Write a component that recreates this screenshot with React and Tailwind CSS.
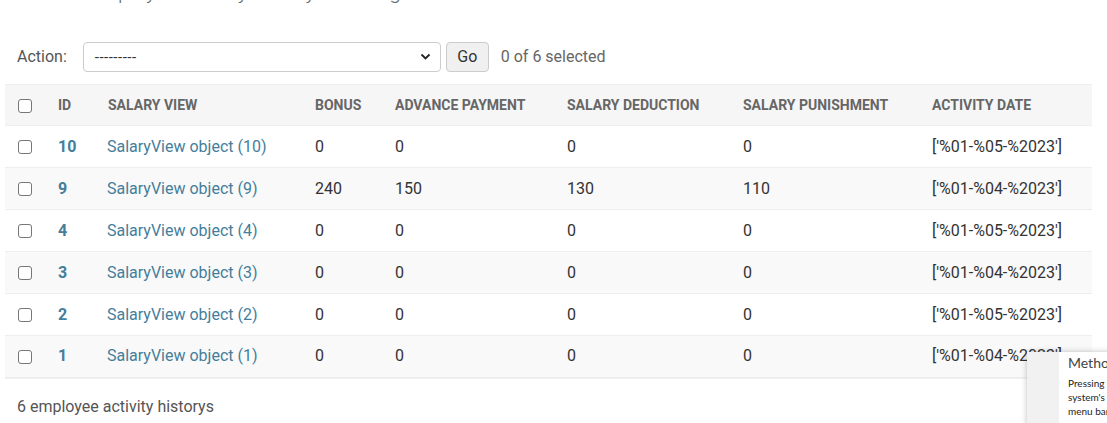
import React from "react";

const rows = [
  { id: 10, b: 0, a: 0, d: 0, p: 0, date: "['%01-%05-%2023']" },
  { id: 9, b: 240, a: 150, d: 130, p: 110, date: "['%01-%04-%2023']" },
  { id: 4, b: 0, a: 0, d: 0, p: 0, date: "['%01-%05-%2023']" },
  { id: 3, b: 0, a: 0, d: 0, p: 0, date: "['%01-%04-%2023']" },
  { id: 2, b: 0, a: 0, d: 0, p: 0, date: "['%01-%05-%2023']" },
  { id: 1, b: 0, a: 0, d: 0, p: 0, date: "['%01-%04-%2023']" },
];

function Box() {
  return <span className="inline-block w-[14px] h-[14px] rounded-[3px] border border-[#767676] bg-white align-middle" />;
}

export default function App() {
  return (
    <div className="relative w-[1107px] h-[423px] overflow-hidden bg-white text-[#333]" style={{ fontFamily: "Roboto, 'Liberation Sans', sans-serif" }}>
      <h1 className="mt-[-20px] ml-[27px] text-[21px] leading-[24px] font-light text-[#666] whitespace-nowrap">Select employee activity history to change</h1>

      <div className="mt-[38px] ml-[17px] flex items-center h-[30px] text-[16px]">
        <span className="text-[#555]">Action:</span>
        <div className="ml-[16px] w-[358px] h-[30px] border border-[#ccc] rounded-[4px] flex items-center justify-between pl-[11px] pr-[9px]">
          <span className="text-[15px] text-[#333] tracking-[0.5px]">---------</span>
          <svg width="11" height="8" viewBox="0 0 11 8"><path d="M1.5 1.5 L5.5 5.5 L9.5 1.5" fill="none" stroke="#222" strokeWidth="1.8" /></svg>
        </div>
        <button className="ml-[5px] w-[43px] h-[30px] border border-[#ccc] rounded-[4px] bg-[#f0f0f0] text-[16px] text-[#333]">Go</button>
        <span className="ml-[12px] text-[#666]">0 of 6 selected</span>
      </div>

      <table className="mt-[12px] ml-[5px] w-[1087px] border-collapse text-[16px]" style={{ tableLayout: "fixed" }}>
        <colgroup>
          <col className="w-[45px]" />
          <col className="w-[50px]" />
          <col className="w-[207px]" />
          <col className="w-[80px]" />
          <col className="w-[172px]" />
          <col className="w-[176px]" />
          <col className="w-[189px]" />
          <col className="w-[168px]" />
        </colgroup>
        <thead>
          <tr className="h-[41px] bg-[#f6f6f6] border-t border-b border-[#eee]">
            <th className="pl-[13px] text-left"><Box /></th>
            {["ID", "SALARY VIEW", "BONUS", "ADVANCE PAYMENT", "SALARY DEDUCTION", "SALARY PUNISHMENT", "ACTIVITY DATE"].map((h) => (
              <th key={h} className="pl-[8px] text-left text-[14px] font-bold text-[#666] whitespace-nowrap">{h}</th>
            ))}
          </tr>
        </thead>
        <tbody>
          {rows.map((r, i) => (
            <tr key={r.id} className={`h-[42px] border-b border-[#eee] ${i % 2 ? "bg-[#f9f9f9]" : "bg-white"} ${i === rows.length - 1 ? "border-b-2" : ""}`}>
              <td className="pl-[13px]"><Box /></td>
              <td className="pl-[8px] font-bold text-[#447e9b]">{r.id}</td>
              <td className="pl-[7px] text-[#447e9b] whitespace-nowrap">SalaryView object ({r.id})</td>
              <td className="pl-[8px]">{r.b}</td>
              <td className="pl-[8px]">{r.a}</td>
              <td className="pl-[8px]">{r.d}</td>
              <td className="pl-[8px]">{r.p}</td>
              <td className="pl-[8px] whitespace-nowrap">{r.date}</td>
            </tr>
          ))}
        </tbody>
      </table>

      <div className="mt-[16px] ml-[17px] text-[16px] text-[#555]">6 employee activity historys</div>

      <div className="absolute left-[1027px] top-[352px] w-[320px] h-[120px] bg-white flex shadow-[0_0_6px_rgba(0,0,0,0.25)]" style={{ fontFamily: "Lato, 'Open Sans', sans-serif" }}>
        <div className="w-[32px] bg-[#f1f1f1]" />
        <div className="pl-[9px] pt-[1px]">
          <div className="text-[14px] leading-[20px] text-[#444]">Method of opening</div>
          <div className="mt-[3px] text-[10px] leading-[14px] text-[#222]">
            <div>Pressing the key</div>
            <div>system's keyboard</div>
            <div>menu bar</div>
          </div>
        </div>
      </div>
    </div>
  );
}
